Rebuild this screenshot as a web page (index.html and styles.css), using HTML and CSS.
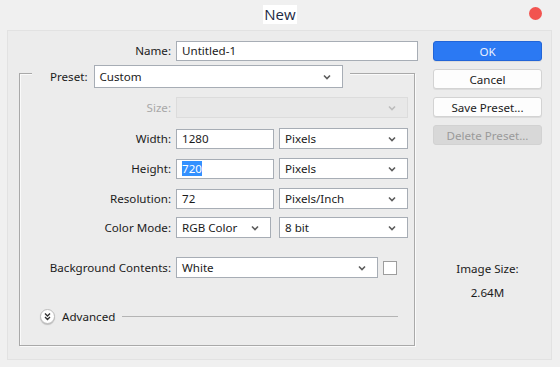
FILE: index.html
```html
<!DOCTYPE html>
<html lang="en">
<head>
  <meta charset="UTF-8">
  <title>New</title>
  <link rel="stylesheet" href="styles.css">
</head>
<body>
  <div class="titlebar">
    <span></span>
    <span class="title">New</span>
    <span class="close"></span>
  </div>

  <div class="dialog">
    <div class="main">
      <div class="name-row">
        <label class="label">Name:</label>
        <div class="field name">Untitled-1</div>
      </div>

      <div class="group">
        <div class="group-head">
          <label class="head-label">Preset:</label>
          <div class="select preset">
            <span>Custom</span>
            <svg class="chev" width="8" height="6" viewBox="0 0 8 6"><path d="M1 1.5l3 3 3-3" /></svg>
          </div>
        </div>

        <div class="row size-row">
          <label class="label disabled">Size:</label>
          <div class="select off size">
            <span></span>
            <svg class="chev" width="8" height="6" viewBox="0 0 8 6"><path d="M1 1.5l3 3 3-3" /></svg>
          </div>
        </div>

        <div class="row">
          <label class="label">Width:</label>
          <div class="field num">1280</div>
          <div class="select unit">
            <span>Pixels</span>
            <svg class="chev" width="8" height="6" viewBox="0 0 8 6"><path d="M1 1.5l3 3 3-3" /></svg>
          </div>
        </div>

        <div class="row tight">
          <label class="label">Height:</label>
          <div class="field num"><span class="picked">720</span></div>
          <div class="select unit">
            <span>Pixels</span>
            <svg class="chev" width="8" height="6" viewBox="0 0 8 6"><path d="M1 1.5l3 3 3-3" /></svg>
          </div>
        </div>

        <div class="row tight">
          <label class="label">Resolution:</label>
          <div class="field num">72</div>
          <div class="select unit">
            <span>Pixels/Inch</span>
            <svg class="chev" width="8" height="6" viewBox="0 0 8 6"><path d="M1 1.5l3 3 3-3" /></svg>
          </div>
        </div>

        <div class="row mode-row">
          <label class="label">Color Mode:</label>
          <div class="select mode">
            <span>RGB Color</span>
            <svg class="chev" width="8" height="6" viewBox="0 0 8 6"><path d="M1 1.5l3 3 3-3" /></svg>
          </div>
          <div class="select unit">
            <span>8 bit</span>
            <svg class="chev" width="8" height="6" viewBox="0 0 8 6"><path d="M1 1.5l3 3 3-3" /></svg>
          </div>
        </div>

        <div class="row bg-row">
          <label class="label">Background Contents:</label>
          <div class="select bg">
            <span>White</span>
            <svg class="chev" width="8" height="6" viewBox="0 0 8 6"><path d="M1 1.5l3 3 3-3" /></svg>
          </div>
          <span class="swatch"></span>
        </div>

        <div class="advanced">
          <span class="toggle">
            <svg width="9" height="9" viewBox="0 0 9 9"><path d="M2 1.5l2.5 2.5L7 1.5M2 5l2.5 2.5L7 5" /></svg>
          </span>
          <span class="adv-text">Advanced</span>
          <span class="adv-line"></span>
        </div>
      </div>
    </div>

    <div class="side">
      <button class="btn primary">OK</button>
      <button class="btn">Cancel</button>
      <button class="btn">Save Preset...</button>
      <button class="btn" disabled>Delete Preset...</button>
      <div class="image-size">
        <div>Image Size:</div>
        <div class="size-value">2.64M</div>
      </div>
    </div>
  </div>
</body>
</html>
```

FILE: styles.css
```css
body {
  margin: 0;
  background-color: #f0f0f0;
  font-family: "Noto Sans", "Open Sans", sans-serif;
  font-size: 11.6px;
  color: #1b1b1b;
}

.titlebar {
  height: 30px;
  display: grid;
  grid-template-columns: 1fr auto 1fr;
  align-items: center;
}

.title {
  font-family: "Open Sans", "Noto Sans", sans-serif;
  font-size: 15px;
  color: #1d2a44;
  background-color: #fff;
  padding: 0 1px;
  line-height: 19px;
  margin-top: -1px;
}

.close {
  justify-self: end;
  width: 13px;
  height: 13px;
  border-radius: 50%;
  background-color: #f25450;
  margin-right: 18px;
  margin-top: -4px;
}

.dialog {
  margin: 0 8px 0 7px;
  height: 330px;
  box-sizing: border-box;
  border: 1px solid #e2e2e2;
  background-color: #ececec;
  display: flex;
}

.main {
  width: 425px;
  flex-shrink: 0;
}

.name-row {
  display: flex;
  align-items: center;
  gap: 5px;
  margin-top: 10px;
}

.name-row .label {
  width: 163px;
}

.label {
  width: 151px;
  text-align: right;
  flex-shrink: 0;
  line-height: 16px;
}

.label.disabled {
  color: #a8a8a8;
}

.field {
  height: 20px;
  box-sizing: border-box;
  border: 1px solid #a7adb5;
  background-color: #fff;
  padding: 0 5px;
  line-height: 18px;
}

.field.name {
  width: 242px;
}

.field.num {
  width: 98px;
}

.picked {
  background-color: #3391ff;
  color: #fff;
}

.select {
  height: 21px;
  box-sizing: border-box;
  border: 1px solid #a7adb5;
  background-color: #fff;
  padding: 0 11px 0 5px;
  display: flex;
  align-items: center;
  justify-content: space-between;
}

.chev path {
  fill: none;
  stroke: #5c5c5c;
  stroke-width: 1.6;
}

.select.off {
  background-color: #e8e8e8;
  border-color: #dcdcdc;
}

.select.off .chev path {
  stroke: #bdbdbd;
}

.select.size {
  width: 232px;
}

.select.unit {
  width: 129px;
}

.select.mode {
  width: 95px;
  margin-right: 3px;
}

.select.bg {
  width: 202px;
}

.group {
  margin: 12px 0 0 11px;
  width: 396px;
  height: 273px;
  box-sizing: border-box;
  border: 1px solid #a9a9a9;
  box-shadow: inset 1px 1px 0 #fafafa, 1px 1px 0 #fafafa;
}

.group-head {
  display: flex;
  width: fit-content;
  align-items: center;
  gap: 6px;
  margin: -9px 0 0 12px;
  padding: 0 7px 0 18px;
  background-color: #ececec;
}

.select.preset {
  width: 249px;
  height: 23px;
}

.row {
  display: flex;
  align-items: center;
  gap: 5px;
  margin-top: 10px;
}

.row.tight {
  margin-top: 9px;
}

.size-row {
  margin-top: 9px;
}

.mode-row {
  margin-top: 8px;
}

.bg-row {
  margin-top: 19px;
}

.swatch {
  width: 14px;
  height: 14px;
  box-sizing: border-box;
  border: 1px solid #9d9d9d;
  background-color: #fff;
}

.advanced {
  display: flex;
  align-items: center;
  margin: 30px 16px 0 20px;
  height: 16px;
}

.toggle {
  width: 15px;
  height: 15px;
  box-sizing: border-box;
  border-radius: 50%;
  border: 1px solid #bdbdbd;
  background-color: #fff;
  box-shadow: 0 1px 1px rgba(0, 0, 0, 0.2);
  display: flex;
  align-items: center;
  justify-content: center;
}

.toggle path {
  fill: none;
  stroke: #333;
  stroke-width: 1.4;
}

.adv-text {
  margin-left: 7px;
}

.adv-line {
  flex: 1;
  height: 1px;
  background-color: #b4b4b4;
  margin-left: 7px;
}

.side {
  width: 109px;
  padding-top: 10px;
  display: flex;
  flex-direction: column;
  gap: 8px;
}

.btn {
  height: 20px;
  padding: 0;
  font-family: inherit;
  font-size: 11.6px;
  color: #1b1b1b;
  background-color: #fdfdfd;
  border: 1px solid #d3d3d3;
  border-radius: 3px;
  box-shadow: 0 1px 0 #dcdcdc;
}

.btn.primary {
  background-color: #2b79f3;
  border-color: #2265d8;
  color: #e8f0ff;
}

.btn:disabled {
  background-color: #d8d8d8;
  border-color: #d2d2d2;
  color: #9a9a9a;
  box-shadow: none;
}

.image-size {
  margin-top: 108px;
  text-align: center;
  line-height: 16px;
}

.size-value {
  margin-top: 8px;
}
```
